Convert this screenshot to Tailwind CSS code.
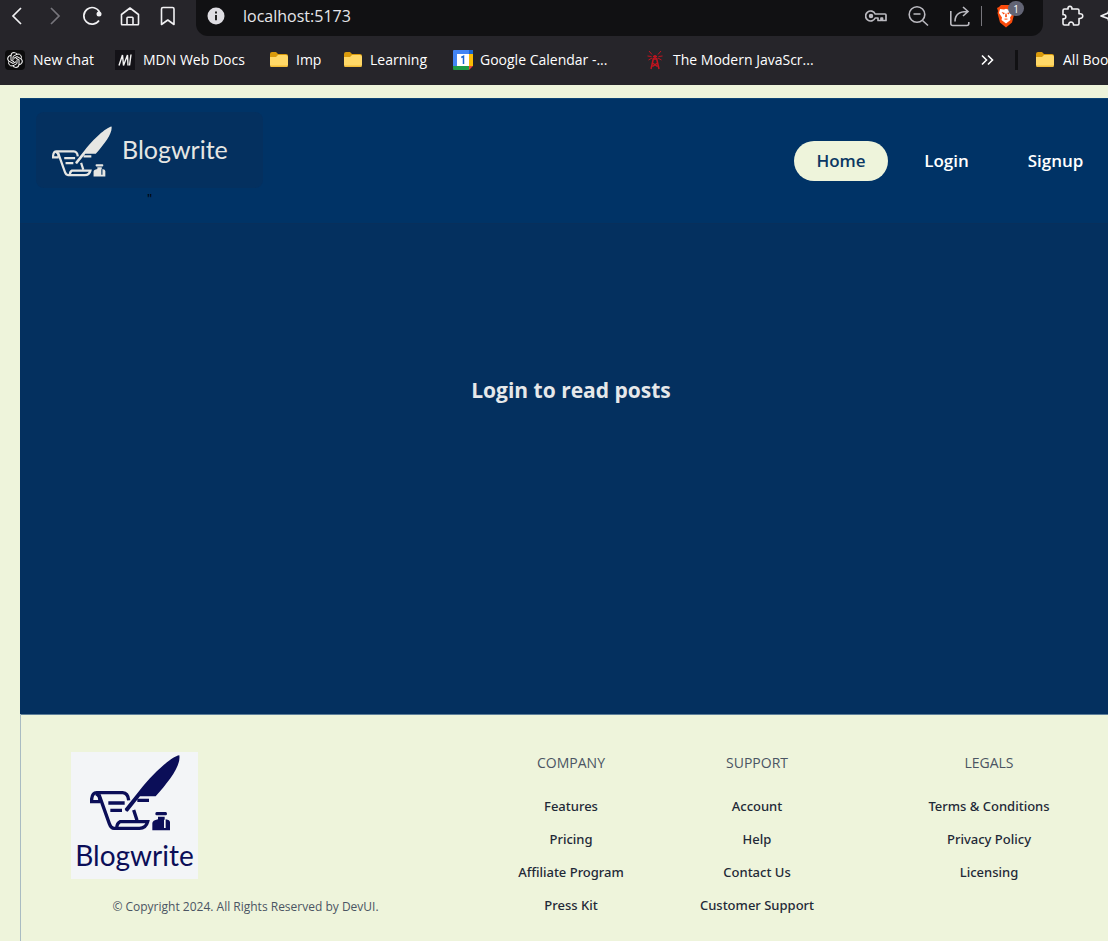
<!DOCTYPE html>
<html lang="en">
<head>
<meta charset="utf-8">
<title>Blogwrite</title>
<script src="https://cdn.jsdelivr.net/npm/@tailwindcss/browser@4"></script>
</head>
<body class="min-h-screen flex flex-col overflow-x-hidden bg-[#eef4db] font-['Open_Sans','Noto_Sans',sans-serif]">

<svg class="hidden" aria-hidden="true">
  <symbol id="quill" viewBox="90 44 270 228">
    <path fill="currentColor" d="M358 45C331 50 276 103 238 151L194 206Q196 214 203 214L240 168H287C328 122 363 76 358 45Z"/>
    <g fill="none" stroke="currentColor" stroke-width="10">
      <path d="M120 184H95V176Q97 157 110 157H188Q204 158 206 180M108 160Q122 166 119 184"/>
      <path d="M117 163L148 250Q153 264 162 264H238Q258 264 263 244H180Q171 248 170 263"/>
      <path d="M145 188H194M151 210H186M232 180H267M221 209L231 240"/>
    </g>
    <path fill="currentColor" d="M290 215h27q4 0 4 5t-4 5h-27q-4 0-4-5t4-5zM294 229h20v9h-2v25h5v-26q13 2 13 9v24h-53v-21q0-9 17-12z"/>
  </symbol>
  <symbol id="folder" viewBox="0 0 20 20">
    <path fill="#d99a0b" d="M1 4q0-2 2-2h4l2 2h8q2 0 2 2v4H1z"/>
    <path fill="#ffd867" d="M1 7l6-0 2-2h8q2 0 2 2v8q0 2-2 2H3q-2 0-2-2z"/>
    <path fill="#f3bc36" d="M1 15.500h18q-.4 1.500-2 1.500H3q-1.600 0-2-1.500z"/>
  </symbol>
</svg>

<header class="bg-[#26252a] text-white">
  <div class="flex h-9">
    <div class="flex h-8 items-center gap-[14px] pl-1 text-[#f1f1f3]">
      <button aria-label="Back"><svg class="size-6" viewBox="0 0 24 24" fill="none" stroke="currentColor" stroke-width="1.700"><path d="M17 4L9 12l8 8"/></svg></button>
      <button aria-label="Forward" class="text-[#77767c]"><svg class="size-6" viewBox="0 0 24 24" fill="none" stroke="currentColor" stroke-width="1.700"><path d="M9 4l8 8-8 8"/></svg></button>
      <button aria-label="Reload"><svg class="size-6" viewBox="0 0 24 24" fill="none" stroke="currentColor" stroke-width="1.700"><path d="M19.500 8A8.300 8.300 0 1 0 19 16.500"/><circle cx="19" cy="10" r="2.500" fill="currentColor" stroke="none"/></svg></button>
      <button aria-label="Home"><svg class="size-6" viewBox="0 0 24 24" fill="none" stroke="currentColor" stroke-width="1.600" stroke-linejoin="round"><path d="M3.500 10.500L12 4l8.500 6.500V20a.8.8 0 0 1-.8.800H4.300a.8.8 0 0 1-.8-.8zM9 20.500V14a.7.7 0 0 1 .7-.7h4.600a.7.700 0 0 1 .7.700v6.500"/></svg></button>
      <button aria-label="Bookmark"><svg class="size-6" viewBox="0 0 24 24" fill="none" stroke="currentColor" stroke-width="1.600" stroke-linejoin="round"><path d="M5.500 5q0-1.500 1.500-1.500h9.500Q18 3.500 18 5v15.500l-6.200-4.500-6.300 4.500z"/></svg></button>
    </div>
    <div class="ml-4 flex h-9 flex-1 items-center rounded-b-xl bg-[#111113] pb-1 pl-[11px] pr-[27px]">
      <svg class="size-[18px]" viewBox="0 0 18 18"><circle cx="9" cy="9" r="8.500" fill="#dfdee3"/><path d="M9 8v5.300M9 4.500v2" stroke="#222" stroke-width="2"/></svg>
      <input aria-label="Address" value="localhost:5173" class="ml-[18px] min-w-0 flex-1 bg-transparent text-base text-[#e6e6ea] outline-none">
      <div class="flex items-center text-[#bbbac0]">
        <svg class="mr-5 h-6 w-[22px]" viewBox="0 0 22 24" fill="none" stroke="currentColor" stroke-width="1.700" stroke-linejoin="round"><path d="M10.200 10H20q1 0 1 1v5.500h-3.500V14H16v2.500h-3V14h-2.800A5 5 0 1 1 10.200 10z"/><circle cx="6" cy="12" r="1.400" fill="currentColor"/></svg>
        <svg class="mr-5 size-[22px]" viewBox="0 0 22 22" fill="none" stroke="currentColor" stroke-width="1.600"><circle cx="10" cy="9.500" r="7.800"/><path d="M6.500 9h7M15.500 15.500L21 20.500"/></svg>
        <svg class="mr-[10px] size-[22px]" viewBox="0 0 22 22" fill="none" stroke="currentColor" stroke-width="1.600"><path d="M1.800 6v12.500q0 2 2 2h14q2 0 2-2V17M6 16.500q0-10 12-10M14 2l5 4.500-5 4.500"/></svg>
        <span class="mr-[14px] h-5 w-px bg-[#77767c]"></span>
        <button class="relative" aria-label="Brave Shields">
          <svg class="h-6 w-5" viewBox="0 0 20 24"><path fill="#fb4b0b" d="M5 1h10l2 2 2 1-1 3 .5 2-2.500 9.500L10 23.500 4 18.500 1.500 9 2 7 1 4l2-1z"/><path fill="#fff" d="M4 5l4 .5 2-.7 2 .7 4-.5 1 4-3 4.500.5 2.500-4.500 3.500L5.500 16l.5-2.500L3 9z"/><path fill="#fb4b0b" d="M5.500 8l3.500 1-1.500 1.500zM14.500 8L11 9l1.500 1.500zM9.500 9.500h1l.5 3-1 1-1-1zM7.500 15l2.500-.6 2.500.6-2.500.8z"/></svg>
          <span class="absolute -top-[3px] left-3 grid h-[15px] w-4 place-items-center rounded-full bg-[#626474] text-[10px] leading-none text-white">1</span>
        </button>
      </div>
    </div>
    <div class="flex h-8 w-[65px] shrink-0 items-center gap-[14px] pl-[18px]">
      <button class="shrink-0" aria-label="Extensions"><svg class="size-6" viewBox="0 0 24 24" fill="none" stroke="#f1f1f3" stroke-width="1.600" stroke-linejoin="round"><path d="M2 6.500Q2 5 3.500 5h3.700C5.700 1.500 12 1.500 10.800 5h5.700Q18 5 18 6.500v3.300c5-1 5 5.400 0 4.700v5q0 1.500-1.500 1.500h-4c.3-4-5.300-4-4.700 0H3.500Q2 21 2 19.500v-4.700c3.800.5 3.800-4.700 0-4.200z"/></svg></button>
      <button class="shrink-0" aria-label="Leo AI"><svg class="size-6" viewBox="0 0 24 24" fill="none" stroke="#f1f1f3" stroke-width="1.700" stroke-linejoin="round"><path d="M11 3l-2 6-7 3 7 2.500 2 6 2-6 7-2.500-7-3z"/></svg></button>
    </div>
  </div>

  <nav aria-label="Bookmarks" class="flex h-[49px] items-center whitespace-nowrap pb-px pl-[5px] text-sm">
    <a href="#" class="flex w-[110px] shrink-0 items-center gap-2">
      <svg class="size-5" viewBox="0 0 20 20" fill="none" stroke="#f2f2f2" stroke-width="1"><rect width="20" height="20" rx="4" fill="#0c0c0d" stroke="none"/><path d="M8 10V6.500L12 4.200q3-1 4.200 1.800.6 1.700-.4 3"/><path d="M8 10V6.500L12 4.200q3-1 4.200 1.800.6 1.700-.4 3" transform="rotate(60 10 10)"/><path d="M8 10V6.500L12 4.200q3-1 4.200 1.800.6 1.700-.4 3" transform="rotate(120 10 10)"/><path d="M8 10V6.500L12 4.200q3-1 4.200 1.800.6 1.700-.4 3" transform="rotate(180 10 10)"/><path d="M8 10V6.500L12 4.200q3-1 4.200 1.800.6 1.700-.4 3" transform="rotate(240 10 10)"/><path d="M8 10V6.500L12 4.200q3-1 4.200 1.800.6 1.700-.4 3" transform="rotate(300 10 10)"/></svg>New chat</a>
    <a href="#" class="flex w-[154px] shrink-0 items-center gap-2">
      <svg class="size-5" viewBox="0 0 20 20" fill="none" stroke="#f2f2f2" stroke-width="1.400"><path fill="#131217" stroke="none" d="M0 0h20v20H0z"/><path stroke-linejoin="bevel" d="M4 15.500L7.500 5 8.500 15.500 12.500 5l.5 10.500M16 4.500L14.500 15.500"/></svg>MDN Web Docs</a>
    <a href="#" class="flex w-[74px] shrink-0 items-center gap-[7px]"><svg class="size-5"><use href="#folder"/></svg>Imp</a>
    <a href="#" class="flex w-[110px] shrink-0 items-center gap-[7px]"><svg class="size-5"><use href="#folder"/></svg>Learning</a>
    <a href="#" class="flex w-[192px] shrink-0 items-center gap-[7px]">
      <svg class="size-5" viewBox="0 0 20 20"><path fill="#4285f4" d="M0 1q0-1 1-1h18q1 0 1 1v3H4v12H0z"/><path fill="#1a67d2" d="M16 0h3q1 0 1 1v3h-4z"/><path fill="#fbbc04" d="M16 4h4v12h-4z"/><path fill="#1e9b47" d="M0 16h16v4H1q-1 0-1-1z"/><path fill="#ea4335" d="M16 16h4l-4 4z"/><path fill="#fff" d="M4 4h12v12H4z"/><path d="M8.300 7.500l2.200-1.300V14" fill="none" stroke="#1a67d2" stroke-width="1.500"/></svg>Google Calendar -...</a>
    <a href="#" class="flex shrink-0 items-center gap-2">
      <svg class="size-5" viewBox="0 0 20 20" fill="none" stroke="#c3141f" stroke-width="1.500"><path d="M8.500 8L6 19M11.500 8L14 19M7.500 13l5 3.500M12.500 13l-5 3.500M8 6.500h4M10 5v5"/><path stroke-width="1" d="M7 4.500L4 1M13 4.500L16 1M6.500 6.500L2.500 6M13.500 6.500l4-.5M7 8l-3.500 2M13 8l3.500 2"/></svg>The Modern JavaScr...</a>
    <div class="ml-auto flex w-[128px] shrink-0 items-center">
      <button class="shrink-0" aria-label="More bookmarks"><svg class="h-4 w-[14px]" viewBox="0 0 14 16" fill="none" stroke="#fff" stroke-width="1.600"><path d="M2 3.500L6.500 8 2 12.500M8 3.500L12.500 8 8 12.500"/></svg></button>
      <span class="ml-[21px] h-5 w-[3px] shrink-0 bg-[#111113]"></span>
      <a href="#" class="ml-[17px] flex shrink-0 items-center gap-2"><svg class="size-5 shrink-0"><use href="#folder"/></svg>All Bookmarks</a>
    </div>
  </nav>
</header>

<div class="ml-5 mt-[13px] flex flex-1 flex-col border-l border-[#a9bbc2]">
  <header class="-ml-px flex h-[125px] items-start justify-between border-t border-[#0c4475] bg-[#003366] pl-4 pr-[2px] pt-[13px] text-[#e6e6e3]">
    <a href="#" class="flex flex-col items-center text-center">
      <span class="flex h-[76px] w-[227px] items-center rounded-lg bg-[#04305f] pl-4 pt-[3px]">
        <svg class="h-[51px] w-[60px]"><use href="#quill"/></svg>
        <span class="ml-[10px] pb-1 font-['Liberation_Sans_Narrow','Lato',sans-serif] text-[25px]">Blogwrite</span>
      </span>
      <span class="text-[13px] leading-5 text-black">"</span>
    </a>
    <nav aria-label="Main" class="mt-[29px] flex gap-[14px] text-[17px] font-semibold leading-10 text-white">
      <a href="#" class="w-[94px] rounded-full bg-[#eef4db] text-center text-[#0b3763]">Home</a>
      <a href="#" class="w-[89px] text-center">Login</a>
      <a href="#" class="w-[101px] text-center">Signup</a>
    </nav>
  </header>

  <main class="-ml-px flex h-[491px] justify-center border-t border-[#082f5b] bg-[#04305f] pl-[14px] pt-[150px]">
    <h1 class="text-[21px] font-bold leading-8 text-[#e6e8ea]">Login to read posts</h1>
  </main>

  <footer class="grid grid-cols-[457fr_186fr_186fr_258fr] border-t border-[#5e7f99] pt-[37px] text-center">
    <div>
      <div class="ml-[50px] flex size-[127px] flex-col items-center bg-[#f3f5f7] pt-[3px] text-[#0b0e58]">
        <svg class="h-[76px] w-[90px]"><use href="#quill"/></svg>
        <span class="mt-[6px] font-['Liberation_Sans_Narrow','Lato',sans-serif] text-[28px] leading-9">Blogwrite</span>
      </div>
      <p class="mt-[18px] pr-2 text-xs leading-5 text-[#4b5563]">© Copyright 2024. All Rights Reserved by DevUI.</p>
    </div>
    <section>
      <h2 class="text-sm font-medium leading-[22px] text-[#4b5563]">COMPANY</h2>
      <ul class="mt-[22px] flex flex-col gap-[13px] pb-6 font-['Noto_Sans','Open_Sans',sans-serif] text-[13px] font-medium leading-5 text-[#1f2937]">
        <li><a href="#">Features</a></li><li><a href="#">Pricing</a></li><li><a href="#">Affiliate Program</a></li><li><a href="#">Press Kit</a></li>
      </ul>
    </section>
    <section>
      <h2 class="text-sm font-medium leading-[22px] text-[#4b5563]">SUPPORT</h2>
      <ul class="mt-[22px] flex flex-col gap-[13px] pb-6 font-['Noto_Sans','Open_Sans',sans-serif] text-[13px] font-medium leading-5 text-[#1f2937]">
        <li><a href="#">Account</a></li><li><a href="#">Help</a></li><li><a href="#">Contact Us</a></li><li><a href="#">Customer Support</a></li>
      </ul>
    </section>
    <section class="pl-5">
      <h2 class="text-sm font-medium leading-[22px] text-[#4b5563]">LEGALS</h2>
      <ul class="mt-[22px] flex flex-col gap-[13px] pb-6 font-['Noto_Sans','Open_Sans',sans-serif] text-[13px] font-medium leading-5 text-[#1f2937]">
        <li><a href="#">Terms &amp; Conditions</a></li><li><a href="#">Privacy Policy</a></li><li><a href="#">Licensing</a></li>
      </ul>
    </section>
  </footer>
</div>
</body>
</html>
